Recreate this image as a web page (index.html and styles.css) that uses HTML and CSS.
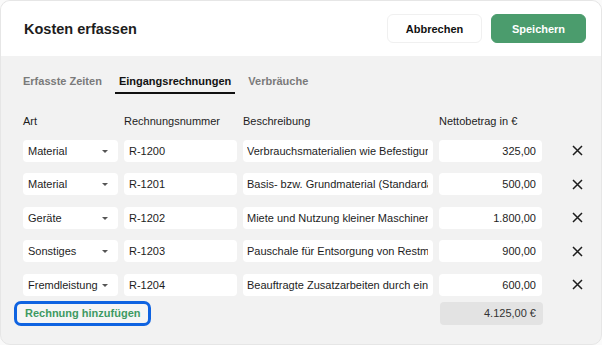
FILE: index.html
```html
<!DOCTYPE html>
<html lang="de">
<head>
    <meta charset="UTF-8">
    <meta name="viewport" content="width=device-width, initial-scale=1.0">
    <title>Kosten erfassen</title>
    <link rel="stylesheet" href="styles.css">
</head>
<body>
    <div class="card">
        <!-- Header -->
        <div class="header">
            <h1>Kosten erfassen</h1>
            <div class="actions">
                <button class="btn btn-light">Abbrechen</button>
                <button class="btn btn-green">Speichern</button>
            </div>
        </div>

        <div class="content">
            <!-- Tabs -->
            <div class="tabs">
                <span class="tab">Erfasste Zeiten</span>
                <span class="tab active">Eingangsrechnungen</span>
                <span class="tab">Verbräuche</span>
            </div>

            <!-- Rechnungen -->
            <div class="grid">
                <div class="head">Art</div>
                <div class="head">Rechnungsnummer</div>
                <div class="head">Beschreibung</div>
                <div class="head">Nettobetrag in €</div>
                <div></div>

                <div class="field select">Material<span class="caret"></span></div>
                <input class="field" value="R-1200">
                <input class="field desc" value="Verbrauchsmaterialien wie Befestigungsmittel">
                <input class="field num" value="325,00">
                <div class="remove"><svg width="11" height="11" viewBox="0 0 11 11"><path d="M1 1L10 10M10 1L1 10" stroke="#1d1d1d" stroke-width="1.5"/></svg></div>

                <div class="field select">Material<span class="caret"></span></div>
                <input class="field" value="R-1201">
                <input class="field desc" value="Basis- bzw. Grundmaterial (Standardausführung)">
                <input class="field num" value="500,00">
                <div class="remove"><svg width="11" height="11" viewBox="0 0 11 11"><path d="M1 1L10 10M10 1L1 10" stroke="#1d1d1d" stroke-width="1.5"/></svg></div>

                <div class="field select">Geräte<span class="caret"></span></div>
                <input class="field" value="R-1202">
                <input class="field desc" value="Miete und Nutzung kleiner Maschinen">
                <input class="field num" value="1.800,00">
                <div class="remove"><svg width="11" height="11" viewBox="0 0 11 11"><path d="M1 1L10 10M10 1L1 10" stroke="#1d1d1d" stroke-width="1.5"/></svg></div>

                <div class="field select">Sonstiges<span class="caret"></span></div>
                <input class="field" value="R-1203">
                <input class="field desc" value="Pauschale für Entsorgung von Restmaterial">
                <input class="field num" value="900,00">
                <div class="remove"><svg width="11" height="11" viewBox="0 0 11 11"><path d="M1 1L10 10M10 1L1 10" stroke="#1d1d1d" stroke-width="1.5"/></svg></div>

                <div class="field select">Fremdleistung<span class="caret"></span></div>
                <input class="field" value="R-1204">
                <input class="field desc" value="Beauftragte Zusatzarbeiten durch einen Subunternehmer">
                <input class="field num" value="600,00">
                <div class="remove"><svg width="11" height="11" viewBox="0 0 11 11"><path d="M1 1L10 10M10 1L1 10" stroke="#1d1d1d" stroke-width="1.5"/></svg></div>
            </div>

            <!-- Footer -->
            <div class="footer">
                <button class="add">Rechnung hinzufügen</button>
                <div class="total">4.125,00 €</div>
            </div>
        </div>
    </div>
</body>
</html>
```

FILE: styles.css
```css
* {
    box-sizing: border-box;
}

body {
    margin: 0;
    background-color: #fafafa;
    font-family: "Liberation Sans", Arial, sans-serif;
    color: #1d1d1d;
}

.card {
    height: 345px;
    border: 1px solid #e6e6e6;
    border-radius: 10px;
    overflow: hidden;
    background-color: #f2f2f2;
}

.header {
    height: 55px;
    background-color: #fff;
    display: flex;
    align-items: center;
    justify-content: space-between;
    padding: 0 15px 0 23px;
}

h1 {
    margin: 0;
    font-size: 14.5px;
    font-weight: bold;
}

.actions {
    display: flex;
    gap: 9px;
}

.btn {
    width: 95px;
    height: 29px;
    border-radius: 6px;
    font-family: inherit;
    font-size: 11px;
    font-weight: bold;
    cursor: pointer;
}

.btn-light {
    background-color: #fff;
    border: 1px solid #f0f0f0;
    color: #111;
}

.btn-green {
    background-color: #4b9c6d;
    border: 1px solid #4b9c6d;
    color: #fff;
}

.content {
    padding: 17px 22px 0 22px;
}

.tabs {
    display: flex;
    gap: 9px;
    margin-left: -4px;
}

.tab {
    padding: 2px 4px 5px;
    font-size: 11px;
    font-weight: bold;
    color: #7a7a7a;
}

.tab.active {
    color: #111;
    border-bottom: 2px solid #111;
}

.grid {
    display: grid;
    grid-template-columns: 95px 113px 190px 103px 1fr;
    column-gap: 6px;
    row-gap: 11.5px;
    margin-top: 21px;
}

.head {
    font-size: 11px;
    margin-bottom: 1px;
}

.field {
    width: 100%;
    height: 22px;
    margin: 0;
    border: none;
    outline: none;
    background-color: #fff;
    border-radius: 4px;
    padding: 0 5px;
    font-family: inherit;
    font-size: 11px;
    line-height: 22px;
    color: #1d1d1d;
    white-space: nowrap;
    overflow: hidden;
}

.select {
    position: relative;
}

.caret {
    position: absolute;
    right: 10px;
    top: 10px;
    border-left: 3px solid transparent;
    border-right: 3px solid transparent;
    border-top: 3px solid #555;
}

.desc {
    padding-left: 4px;
}

.num {
    text-align: right;
    padding-right: 6px;
}

.remove {
    display: flex;
    align-items: center;
    padding-left: 24px;
}

.footer {
    display: flex;
    justify-content: space-between;
    align-items: center;
    margin-top: 5px;
    width: 520px;
}

.add {
    margin-left: -9px;
    height: 25px;
    padding: 0 8px;
    border: 3px solid #0f63e1;
    border-radius: 7px;
    background-color: #f5f5f5;
    color: #3e9a62;
    font-family: inherit;
    font-size: 11px;
    font-weight: bold;
}

.total {
    width: 103px;
    height: 23px;
    line-height: 23px;
    background-color: #e3e3e3;
    border-radius: 4px;
    text-align: right;
    padding-right: 7px;
    font-size: 11px;
    color: #333;
}
```
